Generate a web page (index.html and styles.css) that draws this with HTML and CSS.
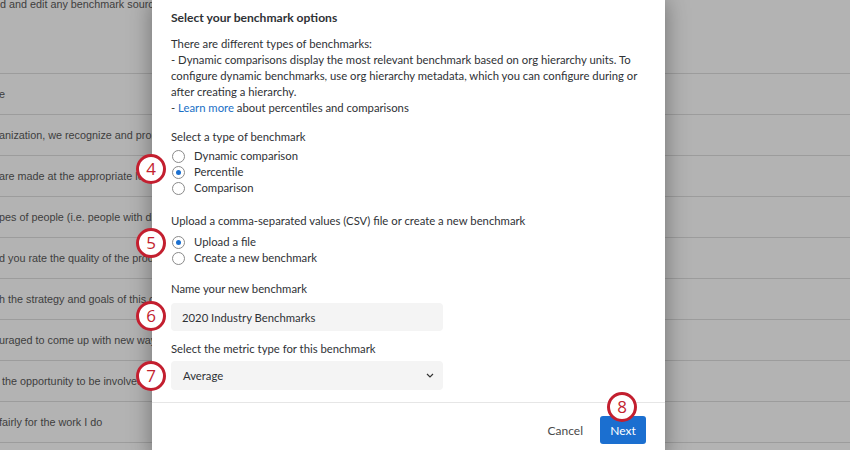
FILE: index.html
```html
<!DOCTYPE html>
<html>
<head>
<meta charset="utf-8">
<link rel="stylesheet" href="styles.css">
</head>
<body>
<div class="page">
  <div class="page-top">d and edit any benchmark sources</div>
  <div class="rows">
    <div class="row">e</div>
    <div class="row">anization, we recognize and promote</div>
    <div class="row">are made at the appropriate level</div>
    <div class="row">pes of people (i.e. people with different</div>
    <div class="row">d you rate the quality of the products</div>
    <div class="row">h the strategy and goals of this company</div>
    <div class="row">uraged to come up with new ways</div>
    <div class="row">&nbsp;the opportunity to be involved</div>
    <div class="row">fairly for the work I do</div>
    <div class="row"></div>
  </div>
</div>

<div class="modal">
  <div class="modal-body">
    <div class="title">Select your benchmark options</div>
    <div class="intro">There are different types of benchmarks:<br>- Dynamic comparisons display the most relevant benchmark based on org hierarchy units. To configure dynamic benchmarks, use org hierarchy metadata, which you can configure during or after creating a hierarchy.<br>- <a class="link">Learn more</a> about percentiles and comparisons</div>

    <div class="label first">Select a type of benchmark</div>
    <div class="radios r1">
      <div class="radio"><span class="dot"></span>Dynamic comparison</div>
      <div class="radio"><span class="dot on"></span>Percentile</div>
      <div class="radio"><span class="dot"></span>Comparison</div>
    </div>

    <div class="label upload">Upload a comma-separated values (CSV) file or create a new benchmark</div>
    <div class="radios r2">
      <div class="radio"><span class="dot on"></span>Upload a file</div>
      <div class="radio"><span class="dot"></span>Create a new benchmark</div>
    </div>

    <div class="label name">Name your new benchmark</div>
    <div class="field input">2020 Industry Benchmarks</div>

    <div class="label metric">Select the metric type for this benchmark</div>
    <div class="field select"><span>Average</span>
      <svg class="chev" width="8" height="5" viewBox="0 0 8 5"><path d="M1 1l3 3 3-3" fill="none" stroke="#333" stroke-width="1.2"/></svg>
    </div>
  </div>
  <div class="footer">
    <span class="cancel">Cancel</span>
    <span class="next">Next</span>
  </div>
</div>

<div class="badge b4">4</div>
<div class="badge b5">5</div>
<div class="badge b6">6</div>
<div class="badge b7">7</div>
<div class="badge b8">8</div>
</body>
</html>
```

FILE: styles.css
```css
html, body {
  margin: 0;
  padding: 0;
  width: 850px;
  height: 450px;
  overflow: hidden;
  background: #b3b3b3;
}

.page {
  font-family: "Liberation Sans", Arial, sans-serif;
  font-size: 10.8px;
  color: #3e3e3e;
  white-space: nowrap;
  overflow: hidden;
}

.page-top {
  height: 73px;
  line-height: 11px;
  margin-top: -1px;
  margin-bottom: 1px;
}

.row {
  height: 40px;
  line-height: 40px;
  border-top: 1px solid #9c9c9c;
  margin-left: -1px;
}

.modal {
  position: absolute;
  left: 152px;
  top: 0;
  width: 513px;
  height: 460px;
  background: #fff;
  box-shadow: 0 0 22px rgba(0, 0, 0, 0.38);
  font-family: Lato, "Open Sans", sans-serif;
  font-size: 11.3px;
  color: #2f3236;
}

.modal-body {
  padding: 10px 19px 0 19px;
}

.title {
  font-weight: 700;
  font-size: 12.1px;
  line-height: 16px;
}

.intro {
  margin-top: 10px;
  line-height: 16px;
}

.link {
  color: #1a6fc6;
}

.label {
  line-height: 16px;
}

.label.first {
  margin-top: 13px;
}

.label.upload {
  margin-top: 17px;
}

.label.name {
  margin-top: 15px;
}

.label.metric {
  margin-top: 10px;
}

.radios.r1 {
  margin-top: 3px;
}

.radios.r2 {
  margin-top: 5px;
}

.radio {
  display: flex;
  align-items: center;
  height: 16px;
  line-height: 16px;
}

.dot {
  width: 11px;
  height: 11px;
  border: 1px solid #8a8a8a;
  border-radius: 50%;
  background: #fff;
  margin-left: 1px;
  margin-right: 9px;
  position: relative;
  box-sizing: content-box;
}

.dot.on::after {
  content: "";
  position: absolute;
  left: 3px;
  top: 3px;
  width: 5px;
  height: 5px;
  border-radius: 50%;
  background: #1a6fd0;
}

.field {
  width: 272px;
  box-sizing: border-box;
  background: #f4f4f4;
  border-radius: 4px;
  display: flex;
  align-items: center;
  padding: 0 11px;
}

.input {
  margin-top: 6px;
  height: 28px;
}

.select {
  margin-top: 4px;
  height: 29px;
  justify-content: space-between;
  padding-left: 12px;
  padding-right: 9px;
}

.chev {
  display: block;
}

.footer {
  margin-top: 12px;
  border-top: 1px solid #e6e6e6;
  padding: 13px 19px 0 0;
  display: flex;
  justify-content: flex-end;
  align-items: center;
}

.cancel {
  color: #4a4a4a;
  margin-right: 17px;
  font-size: 12px;
}

.next {
  display: flex;
  align-items: center;
  justify-content: center;
  width: 46px;
  height: 28px;
  background: #1b6fd0;
  color: #fff;
  border-radius: 3px;
  font-size: 12px;
}

.badge {
  position: absolute;
  width: 24px;
  height: 24px;
  border: 3px solid #c31f2f;
  border-radius: 50%;
  background: #fff;
  color: #c31f2f;
  font-family: "Open Sans", sans-serif;
  font-size: 17px;
  line-height: 24px;
  text-align: center;
}

.b4 { left: 136px; top: 154px; }
.b5 { left: 136px; top: 228px; }
.b6 { left: 136px; top: 301px; }
.b7 { left: 136px; top: 361px; }
.b8 { left: 607px; top: 392px; }
```
